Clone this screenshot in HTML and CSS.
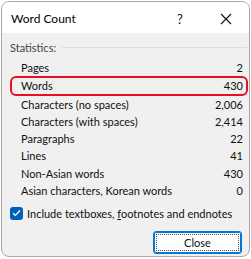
FILE: index.html
```html
<!DOCTYPE html>
<html lang="en">
<head>
  <meta charset="UTF-8" />
  <title>Word Count</title>
  <link rel="stylesheet" href="styles.css">
</head>
<body>
  <div class="dialog">
    <div class="titlebar">
      <span class="title">Word Count</span>
      <span class="help">?</span>
      <span class="close-x">
        <svg width="12" height="12" viewBox="0 0 12 12"><path d="M1 1 L11 11 M11 1 L1 11" stroke="#111" stroke-width="1.1" fill="none"/></svg>
      </span>
    </div>
    <div class="content">
      <div class="group-head">
        <span>Statistics:</span>
        <div class="group-line"></div>
      </div>
      <div class="stats">
        <div class="row"><span>Pages</span><span>2</span></div>
        <div class="row highlight"><span>Words</span><span>430</span></div>
        <div class="row"><span>Characters (no spaces)</span><span>2,006</span></div>
        <div class="row"><span>Characters (with spaces)</span><span>2,414</span></div>
        <div class="row"><span>Paragraphs</span><span>22</span></div>
        <div class="row"><span>Lines</span><span>41</span></div>
        <div class="row"><span>Non-Asian words</span><span>430</span></div>
        <div class="row"><span>Asian characters, Korean words</span><span>0</span></div>
      </div>
      <label class="check">
        <span class="box">
          <svg width="9" height="8" viewBox="0 0 9 8"><path d="M1 4.2 L3.4 6.5 L8 1.5" stroke="#fff" stroke-width="1.2" fill="none"/></svg>
        </span>
        <span class="check-text">Include textboxes, <u>f</u>ootnotes and endnotes</span>
      </label>
      <div class="actions">
        <button class="btn"><span class="focus">Close</span></button>
      </div>
    </div>
  </div>
</body>
</html>
```
FILE: styles.css
```css
body {
  margin: 0;
  background: #fff;
  font-family: Lato, "Noto Sans", sans-serif;
  font-size: 11px;
  color: #111;
}
.dialog {
  margin: 1px 0 0 1px;
  width: 247px;
  height: 254px;
  border: 1px solid #a8a8a8;
  border-radius: 8px;
  overflow: hidden;
  background: #f0f0f0;
  display: flex;
  flex-direction: column;
}
.titlebar {
  height: 31px;
  flex-shrink: 0;
  background: #fff;
  display: flex;
  align-items: center;
  padding-left: 9px;
}
.title {
  font-size: 12px;
  color: #000;
  flex-grow: 1;
  margin-top: 2px;
}
.help {
  font-size: 13px;
  width: 46px;
  text-align: center;
  color: #111;
  margin-top: 2px;
}
.close-x {
  width: 46px;
  display: flex;
  justify-content: center;
  margin-top: 2px;
}
.content {
  padding: 5px 2px 0 8px;
}
.group-head {
  display: flex;
  align-items: center;
  color: #444;
  height: 18px;
}
.group-line {
  flex-grow: 1;
  height: 1px;
  background: #dcdcdc;
  margin-left: 6px;
}
.stats {
  margin-top: 3px;
}
.row {
  display: flex;
  justify-content: space-between;
  height: 17px;
  line-height: 17px;
  padding: 0 4px 0 11px;
}
.row + .row {
  margin-top: 0.3px;
}
.highlight {
  border: 2px solid #e81123;
  border-radius: 6px;
  margin: -2px -1px -1px 0;
  padding: 0 3px 0 9px;
  height: 16px;
  line-height: 16px;
}
.check {
  display: flex;
  align-items: center;
  margin-top: 7px;
  gap: 4px;
  height: 14px;
}
.check-text {
  white-space: nowrap;
}
.box {
  width: 13px;
  height: 13px;
  flex-shrink: 0;
  border-radius: 3px;
  background: #005fb8;
  display: flex;
  align-items: center;
  justify-content: center;
}
.actions {
  display: flex;
  justify-content: flex-end;
  margin-top: 11px;
  padding-right: 5px;
}
.btn {
  width: 89px;
  height: 23px;
  border: 1px solid #0078d4;
  box-shadow: inset 0 0 0 1px #0078d4;
  border-radius: 3px;
  background: #fdfdfd;
  padding: 2px;
  font-family: Lato, "Noto Sans", sans-serif;
  font-size: 11px;
  color: #111;
}
.focus {
  display: flex;
  height: 100%;
  align-items: center;
  justify-content: center;
  border: 1px dotted #555;
  box-sizing: border-box;
}
```
